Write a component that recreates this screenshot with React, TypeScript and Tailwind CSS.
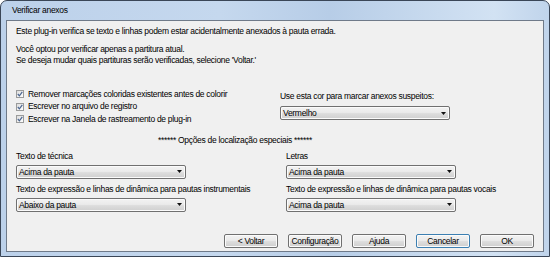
const btnBg =
  "bg-[linear-gradient(#f2f2f2,#ebebeb_45%,#dddddd_55%,#cfcfcf)] shadow-[inset_0_0_0_1px_#fbfbfb]";

const Combo = ({ value }: { value: string }) => (
  <div
    className={`w-[170px] h-[14px] rounded-[2px] border border-[#707070] ${btnBg} flex items-center justify-between pl-[2px] pr-[3px]`}
  >
    <span className="leading-[12px]">{value}</span>
    <svg width="5" height="3" viewBox="0 0 5 3">
      <path d="M0 0 H5 L2.5 3 Z" fill="#111" />
    </svg>
  </div>
);

const Check = ({ label }: { label: string }) => (
  <div className="h-[12.5px] flex items-center gap-[4px]">
    <span className="w-[8px] h-[8px] border border-[#9a9b9b] bg-[linear-gradient(135deg,#dcdcdc,#ffffff)] flex items-center justify-center">
      <svg width="6" height="6" viewBox="0 0 6 6">
        <path d="M0.8 3 L2.4 4.8 L5.3 0.9" stroke="#4a6590" strokeWidth="1.2" fill="none" />
      </svg>
    </span>
    <span className="leading-[11px]">{label}</span>
  </div>
);

const Button = ({ label, focused }: { label: string; focused?: boolean }) => (
  <button
    className={`w-[54px] h-[14px] rounded-[2px] border ${
      focused ? "border-[#3c7fb1]" : "border-[#707070]"
    } ${btnBg} flex items-center justify-center leading-[12px]`}
  >
    {label}
  </button>
);

/**
 * Diálogo "Verificar anexos" no estilo Windows 7
 */
const App = () => {
  return (
    <div className="w-[550px] h-[257px] bg-white font-['Liberation_Sans',Arial,sans-serif] text-[8.5px] tracking-[-0.3px] text-black">
      <div className="w-full h-full rounded-t-[7px] border border-[#3a4657] bg-[linear-gradient(90deg,#bcd1ea,#c5d8ee_40%,#b7cde7_60%,#d2e2f3_90%,#c0d4eb)] flex flex-col px-[5px] pb-[4px]">
        {/* barra de título */}
        <div className="h-[19px] pl-[6px] pt-[4px] leading-[11px]">Verificar anexos</div>

        {/* painel */}
        <div className="flex-1 border border-[#6f7a89] bg-[#f0f0f0] px-[9px] pt-[5px] flex flex-col leading-[11px]">
          <div>Este plug-in verifica se texto e linhas podem estar acidentalmente anexados à pauta errada.</div>
          <div className="mt-[7px]">Você optou por verificar apenas a partitura atual.</div>
          <div>Se deseja mudar quais partituras serão verificadas, selecione 'Voltar.'</div>

          <div className="mt-[21px] grid grid-cols-[264px_1fr]">
            <div className="pt-[1px] flex flex-col">
              <Check label="Remover marcações coloridas existentes antes de colorir" />
              <Check label="Escrever no arquivo de registro" />
              <Check label="Escrever na Janela de rastreamento de plug-in" />
            </div>
            <div className="pt-[4px] flex flex-col gap-[4px]">
              <div>Use esta cor para marcar anexos suspeitos:</div>
              <Combo value="Vermelho" />
            </div>
          </div>

          <div className="mt-[9px] w-[438px] text-center">****** Opções de localização especiais ******</div>

          <div className="mt-[5px] grid grid-cols-[270px_1fr]">
            <div className="flex flex-col">
              <div>Texto de técnica</div>
              <div className="mt-[3px]">
                <Combo value="Acima da pauta" />
              </div>
              <div className="mt-[5px]">Texto de expressão e linhas de dinâmica para pautas instrumentais</div>
              <div className="mt-[3px]">
                <Combo value="Abaixo da pauta" />
              </div>
            </div>
            <div className="flex flex-col">
              <div>Letras</div>
              <div className="mt-[3px]">
                <Combo value="Acima da pauta" />
              </div>
              <div className="mt-[5px]">Texto de expressão e linhas de dinâmica para pautas vocais</div>
              <div className="mt-[3px]">
                <Combo value="Acima da pauta" />
              </div>
            </div>
          </div>

          <div className="mt-[22px] flex justify-end gap-[10px]">
            <Button label="< Voltar" />
            <Button label="Configuração" />
            <Button label="Ajuda" />
            <Button label="Cancelar" focused />
            <Button label="OK" />
          </div>
        </div>
      </div>
    </div>
  );
};

export default App;
